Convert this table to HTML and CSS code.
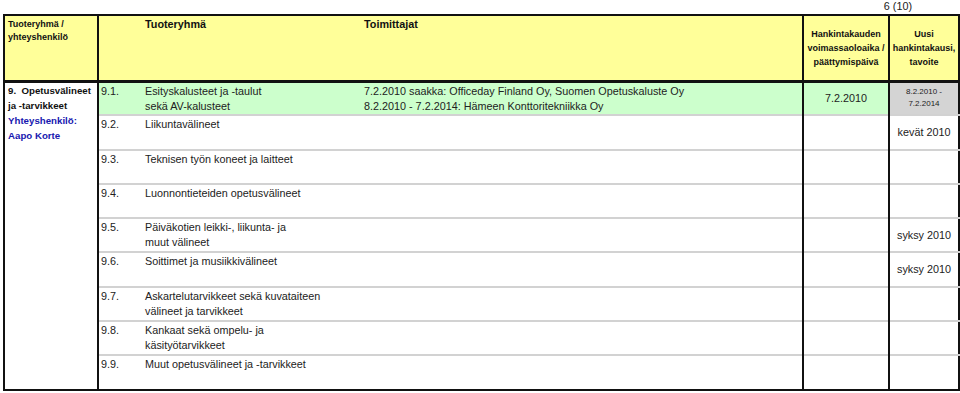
FILE: index.html
```html
<!DOCTYPE html>
<html lang="fi">
<head>
<meta charset="utf-8">
<title>Tuoteryhmät</title>
<link rel="stylesheet" href="styles.css">
</head>
<body>
<div class="page">
  <div class="pageno">6 (10)</div>
  <table class="grid">
    <colgroup>
      <col class="w-group">
      <col class="w-num">
      <col class="w-name">
      <col class="w-sup">
      <col class="w-end">
      <col class="w-new">
    </colgroup>
    <thead>
      <tr class="head">
        <th class="h-group">Tuoteryhmä /<br>yhteyshenkilö</th>
        <th class="h-num"></th>
        <th class="h-mid">Tuoteryhmä</th>
        <th class="h-mid">Toimittajat</th>
        <th class="h-right">Hankintakauden<br>voimassaoloaika /<br>päättymispäivä</th>
        <th class="h-right">Uusi<br>hankintakausi,<br>tavoite</th>
      </tr>
    </thead>
    <tbody>
      <tr class="row hl">
        <td class="group" rowspan="9">
          <div class="g-title">9.&nbsp; Opetusvälineet<br>ja -tarvikkeet</div>
          <div class="g-contact">Yhteyshenkilö:<br>Aapo Korte</div>
        </td>
        <td class="num">9.1.</td>
        <td class="name">Esityskalusteet ja -taulut<br>sekä AV-kalusteet</td>
        <td class="sup">7.2.2010 saakka: Officeday Finland Oy, Suomen Opetuskaluste Oy<br>8.2.2010 - 7.2.2014: Hämeen Konttoritekniikka Oy</td>
        <td class="end">7.2.2010</td>
        <td class="new grey small">8.2.2010 -<br>7.2.2014</td>
      </tr>
      <tr class="row">
        <td class="num">9.2.</td>
        <td class="name">Liikuntavälineet</td>
        <td class="sup"></td>
        <td class="end"></td>
        <td class="new">kevät 2010</td>
      </tr>
      <tr class="row">
        <td class="num">9.3.</td>
        <td class="name">Teknisen työn koneet ja laitteet</td>
        <td class="sup"></td>
        <td class="end"></td>
        <td class="new"></td>
      </tr>
      <tr class="row">
        <td class="num">9.4.</td>
        <td class="name">Luonnontieteiden opetusvälineet</td>
        <td class="sup"></td>
        <td class="end"></td>
        <td class="new"></td>
      </tr>
      <tr class="row">
        <td class="num">9.5.</td>
        <td class="name">Päiväkotien leikki-, liikunta- ja<br>muut välineet</td>
        <td class="sup"></td>
        <td class="end"></td>
        <td class="new">syksy 2010</td>
      </tr>
      <tr class="row">
        <td class="num">9.6.</td>
        <td class="name">Soittimet ja musiikkivälineet</td>
        <td class="sup"></td>
        <td class="end"></td>
        <td class="new">syksy 2010</td>
      </tr>
      <tr class="row">
        <td class="num">9.7.</td>
        <td class="name">Askartelutarvikkeet sekä kuvataiteen<br>välineet ja tarvikkeet</td>
        <td class="sup"></td>
        <td class="end"></td>
        <td class="new"></td>
      </tr>
      <tr class="row">
        <td class="num">9.8.</td>
        <td class="name">Kankaat sekä ompelu- ja<br>käsityötarvikkeet</td>
        <td class="sup"></td>
        <td class="end"></td>
        <td class="new"></td>
      </tr>
      <tr class="row">
        <td class="num">9.9.</td>
        <td class="name">Muut opetusvälineet ja -tarvikkeet</td>
        <td class="sup"></td>
        <td class="end"></td>
        <td class="new"></td>
      </tr>
    </tbody>
  </table>
</div>
</body>
</html>
```

FILE: styles.css
```css
html, body {
  margin: 0;
  padding: 0;
  background: #ffffff;
}

body {
  font-family: "Liberation Sans", Arial, sans-serif;
  color: #222222;
}

.page {
  width: 960px;
  height: 393px;
  overflow: hidden;
}

.pageno {
  display: flex;
  justify-content: flex-end;
  padding-right: 48px;
  height: 14px;
  font-size: 10.8px;
  line-height: 13px;
  color: #222222;
}

.grid {
  margin-left: 3px;
  width: 955px;
  table-layout: fixed;
  border-collapse: collapse;
  border: 2px solid #111111;
}

.w-group { width: 94px; }
.w-num { width: 44px; }
.w-name { width: 219px; }
.w-sup { width: 442px; }
.w-end { width: 86px; }
.w-new { width: 70px; }

/* header */
.head {
  height: 66px;
  background: #ffff99;
}

.head th {
  border-bottom: 3px solid #111111;
  font-weight: bold;
  color: #111111;
  padding: 0;
}

.h-group {
  border-right: 2px solid #111111;
  text-align: left;
  vertical-align: top;
  font-size: 9px;
  line-height: 13px;
  padding: 2px 3px 0 3px !important;
}

.h-mid {
  text-align: left;
  vertical-align: top;
  font-size: 10.8px;
  line-height: 15px;
  padding: 1px 3px 0 3px !important;
}

.h-right {
  border-left: 2px solid #111111;
  text-align: center;
  vertical-align: middle;
  font-size: 9px;
  line-height: 14px;
}

/* body */
.row {
  height: 34.3px;
}

.row td {
  border-top: 2px solid #d2d2d2;
  padding: 1px 3px 0 3px;
  font-size: 10.8px;
  line-height: 15px;
  vertical-align: top;
  white-space: nowrap;
}

.row td.group {
  border-top: 3px solid #111111;
  border-right: 2px solid #111111;
  padding: 0 3px;
  font-weight: bold;
  font-size: 9.7px;
  line-height: 15px;
  color: #111111;
}

.g-contact {
  color: #1818b0;
}

.row td.num {
  padding-left: 2px;
}

.row td.end,
.row td.new {
  border-left: 2px solid #111111;
  text-align: center;
  vertical-align: middle;
  padding: 0;
}

.hl td.num,
.hl td.name,
.hl td.sup,
.hl td.end {
  background: #ccffcc;
}

.row td.grey {
  background: #d4d4d4;
}

.row td.small {
  font-size: 8px;
  line-height: 12px;
}
```
